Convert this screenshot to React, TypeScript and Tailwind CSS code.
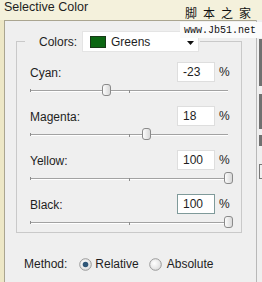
import React from 'react';

const channels = [
  { label: 'Cyan:', value: -23 },
  { label: 'Magenta:', value: 18 },
  { label: 'Yellow:', value: 100 },
  { label: 'Black:', value: 100, focused: true },
];

function Thumb() {
  return (
    <svg width="9" height="12" viewBox="0 0 9 12">
      <defs>
        <linearGradient id="thumbFill" x1="0" y1="0" x2="1" y2="0">
          <stop offset="0" stopColor="#ffffff" />
          <stop offset="1" stopColor="#d6d6d6" />
        </linearGradient>
      </defs>
      <rect x="0.5" y="0.5" width="8" height="11" rx="2.5" fill="url(#thumbFill)" stroke="#8a8a8a" />
    </svg>
  );
}

function Slider({ value }: { value: number }) {
  const center = 99 + (value / 100) * 99;
  return (
    <div className="relative mt-[2px] ml-[13px] h-[14px] w-[198px] pt-[6px]">
      <div className="h-px bg-[#a2a2a2]" />
      <div className="h-px bg-white" />
      <div className="absolute left-0 top-[5px] h-[3px] w-px bg-[#8c8c8c]" />
      <div className="absolute left-[99px] top-[6px] h-[3px] w-px bg-[#8c8c8c]" />
      <div className="absolute top-0 flex" style={{ left: center - 4.5 }}>
        <Thumb />
      </div>
    </div>
  );
}

function Radio({ checked }: { checked?: boolean }) {
  return (
    <svg width="13" height="13" viewBox="0 0 13 13">
      <defs>
        <radialGradient id={checked ? 'rOn' : 'rOff'} cx="0.4" cy="0.4" r="0.7">
          <stop offset="0" stopColor="#ffffff" />
          <stop offset="1" stopColor="#d9d9d9" />
        </radialGradient>
      </defs>
      <circle cx="6.5" cy="6.5" r="5.8" fill={`url(#${checked ? 'rOn' : 'rOff'})`} stroke="#9a9a9a" />
      {checked && <circle cx="6.5" cy="6.5" r="2.8" fill="#2f5677" />}
    </svg>
  );
}

export default function App() {
  return (
    <div className="relative flex h-[282px] w-[262px] flex-col overflow-hidden bg-[#f4f1dc] font-['Liberation_Sans',Arial,sans-serif] text-[12px] text-[#1e1e1e]">
      <div className="h-[20px] shrink-0 pl-[4px] text-[12.5px] leading-[15px]">Selective Color</div>

      <div className="flex flex-1">
        <div className="w-[4px] bg-[#ede7c6]" />

        <div className="flex-1 border-l border-t border-[#aaa590] bg-[#efefef]">
          <fieldset className="mt-[10px] ml-[11px] w-[226px] border border-[#c9c9c9] pb-[2px]">
            <legend className="ml-[8px] pl-[14px] pr-[1px]">
              <div className="flex h-[21px] items-center">
                <span className="w-[43px]">Colors:</span>
                <div className="flex h-[21px] w-[117px] items-center border border-[#e4e4e4] bg-white">
                  <span className="ml-[7px] h-[12px] w-[16px] border border-[#173a17] bg-[#0b6612]" />
                  <span className="ml-[5px] flex-1">Greens</span>
                  <svg width="7" height="4" viewBox="0 0 7 4" className="mr-[4px] mt-[3px]">
                    <path d="M0 0h7L3.5 4z" fill="#111" />
                  </svg>
                </div>
              </div>
            </legend>

            <div className="flex flex-col gap-[8px] pt-[10px]">
              {channels.map((c) => (
                <div key={c.label}>
                  <div className="flex h-[20px] items-center pl-[13px] pr-[10px]">
                    <span className="flex-1 pt-[2px]">{c.label}</span>
                    <div
                      className={
                        c.focused
                          ? 'flex h-[20px] w-[38px] items-center border border-[#7f9a9a] bg-white pl-[5px]'
                          : 'flex h-[20px] w-[38px] items-center border border-[#dedede] bg-white pl-[5px]'
                      }
                    >
                      {c.value}
                    </div>
                    <span className="ml-[4px] w-[12px]">%</span>
                  </div>
                  <Slider value={c.value} />
                </div>
              ))}
            </div>
          </fieldset>

          <div className="mt-[22px] flex h-[18px] items-center pl-[19px]">
            <span>Method:</span>
            <span className="ml-[12px] flex">
              <Radio checked />
            </span>
            <span className="ml-[3px]">Relative</span>
            <span className="ml-[10px] flex">
              <Radio />
            </span>
            <span className="ml-[5px]">Absolute</span>
          </div>
        </div>

        <div className="flex w-[6px] flex-col border-l border-[#b8b8b8] bg-[#efefef] pl-[2px]">
          <div className="mt-[19px] h-[47px] w-[3px] bg-[#707070]" />
          <div className="mt-[8px] h-[35px] w-[3px] bg-[#707070]" />
          <div className="mt-[6px] h-[11px] w-[3px] bg-[#707070]" />
          <div className="mt-[18px] h-[15px] w-[3px] border-y border-l border-[#777]" />
        </div>
      </div>

      <div className="absolute left-[185px] top-[5px] text-[12px] leading-[15px] tracking-[6px] text-[#111] font-['Noto_Sans_CJK_SC',sans-serif]">
        脚本之家
      </div>
      <div className="absolute left-[180px] top-[22px] h-[16px] w-[82px] bg-[#fbfbfb] pl-[4px] pt-[3px] font-['Liberation_Mono',monospace] text-[10px] leading-[12px] text-[#111]">
        www.Jb51.net
      </div>
    </div>
  );
}
